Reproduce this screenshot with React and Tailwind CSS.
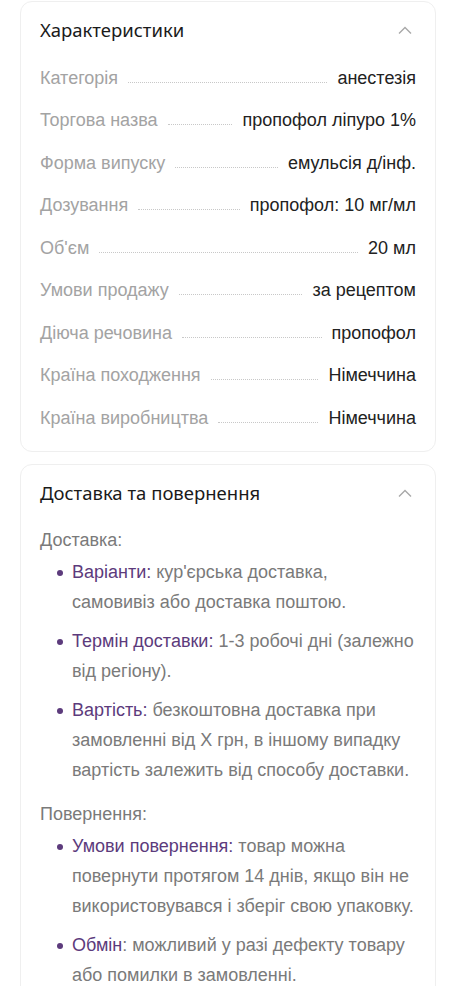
import { useState } from "react";

const specs = [
  ["Категорія", "анестезія"],
  ["Торгова назва", "пропофол ліпуро 1%"],
  ["Форма випуску", "емульсія д/інф."],
  ["Дозування", "пропофол: 10 мг/мл"],
  ["Об'єм", "20 мл"],
  ["Умови продажу", "за рецептом"],
  ["Діюча речовина", "пропофол"],
  ["Країна походження", "Німеччина"],
  ["Країна виробництва", "Німеччина"],
];

const delivery = [
  ["Варіанти:", " кур'єрська доставка,", " самовивіз або доставка поштою."],
  ["Термін доставки:", " 1-3 робочі дні (залежно від регіону)."],
  ["Вартість:", " безкоштовна доставка при замовленні від X грн, в іншому випадку вартість залежить від способу доставки."],
];

const returns = [
  ["Умови повернення:", " товар можна повернути протягом 14 днів, якщо він не використовувався і зберіг свою упаковку."],
  ["Обмін", ": можливий у разі дефекту товару або помилки в замовленні."],
];

const Chevron = () => (
  <svg width="16" height="10" viewBox="0 0 16 10" fill="none">
    <path d="M2 8.5L8 2.5L14 8.5" stroke="#a8a8a8" strokeWidth="1.4" />
  </svg>
);

const Card = ({ title, children }) => {
  const [open, setOpen] = useState(true);
  return (
    <div className="rounded-[12px] border border-[#efefef] bg-white px-[19px]">
      <button
        onClick={() => setOpen(!open)}
        className="flex w-full items-center justify-between pt-[16px] text-left"
      >
        <span className="font-['Noto_Sans',sans-serif] text-[18.5px] leading-[24px] text-[#1a1a1a]">
          {title}
        </span>
        <span className="mr-[3px]">
          <Chevron />
        </span>
      </button>
      {open && children}
    </div>
  );
};

const BulletList = ({ items }) => (
  <ul className="flex flex-col gap-[9px] pl-[32px]">
    {items.map(([term, rest, more]) => (
      <li key={term} className="relative text-[18px] leading-[30px] text-[#7a7a7a]">
        <span className="absolute left-[-15px] top-[13px] h-[6px] w-[6px] rounded-full bg-[#5c3b7c]" />
        <span className="text-[#5c3b7c]">{term}</span>
        {rest}
        {more && (
          <>
            <br />
            {more.trim()}
          </>
        )}
      </li>
    ))}
  </ul>
);

export default function App() {
  return (
    <div className="min-h-screen bg-white px-[20px] pt-px font-['Liberation_Sans',Arial,sans-serif]">
      <Card title="Характеристики">
        <div className="pt-[15px] pb-[11px]">
          {specs.map(([label, value]) => (
            <div key={label} className="flex h-[42.5px] items-center text-[18px]">
              <span className="text-[#a3a3a3]">{label}</span>
              <span className="mx-[10px] mt-[8px] flex-1 border-b border-dotted border-[#c8c8c8]" />
              <span className="text-[#222]">{value}</span>
            </div>
          ))}
        </div>
      </Card>

      <div className="h-[12px]" />

      <Card title="Доставка та повернення">
        <div className="pt-[20px] pb-[20px]">
          <p className="text-[18px] leading-[30px] text-[#7a7a7a]">Доставка:</p>
          <div className="pt-[2px]">
            <BulletList items={delivery} />
          </div>
          <p className="pt-[14px] text-[18px] leading-[30px] text-[#7a7a7a]">Повернення:</p>
          <div className="pt-[2px]">
            <BulletList items={returns} />
          </div>
        </div>
      </Card>
    </div>
  );
}
